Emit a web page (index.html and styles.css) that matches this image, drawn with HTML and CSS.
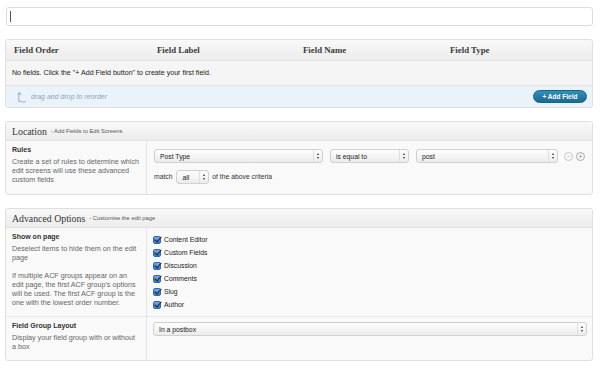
FILE: index.html
```html
<!DOCTYPE html>
<html>
<head>
<meta charset="utf-8">
<title>Edit Field Group</title>
<link rel="stylesheet" href="styles.css">
</head>
<body>
<div class="page">

  <div class="title_box"><span class="caret"></span></div>

  <div class="fields">
    <div class="fields_head">
      <span>Field Order</span>
      <span>Field Label</span>
      <span>Field Name</span>
      <span>Field Type</span>
    </div>
    <div class="fields_empty">No fields. Click the "+ Add Field button" to create your first field.</div>
    <div class="fields_foot">
      <div class="drag">
        <svg width="12" height="12" viewBox="0 0 12 12"><path d="M3 10.5 C2.5 7 2.5 4 3.5 1.5 M1.5 3.5 L3.5 1.5 L5 3.8 M3.5 10.2 C5 11 7 11 9.5 10.8" fill="none" stroke="#8fa7b8" stroke-width="0.9" stroke-linecap="round"/></svg>
        <span>drag and drop to reorder</span>
      </div>
      <div class="add_btn">+ Add Field</div>
    </div>
  </div>

  <!-- Location -->
  <div class="postbox">
    <div class="postbox_head"><h3>Location</h3><small>- Add Fields to Edit Screens</small></div>
    <div class="row loc_row">
      <div class="label">
        <b>Rules</b>
        <p>Create a set of rules to determine which edit screens will use these advanced custom fields</p>
      </div>
      <div class="field">
        <div class="rule">
          <div class="select w_param">Post Type<i class="arr"></i></div>
          <div class="select w_op">is equal to<i class="arr"></i></div>
          <div class="select w_val">post<i class="arr"></i></div>
          <span class="circ">&minus;</span>
          <span class="circ plus">+</span>
        </div>
        <div class="match">
          match <div class="select w_all">all<i class="arr"></i></div> of the above criteria
        </div>
      </div>
    </div>
  </div>

  <!-- Advanced Options -->
  <div class="postbox">
    <div class="postbox_head"><h3>Advanced Options</h3><small>- Customise the edit page</small></div>
    <div class="row show_row">
      <div class="label">
        <b>Show on page</b>
        <p>Deselect items to hide them on the edit page</p>
        <p class="gap">If multiple ACF groups appear on an edit page, the first ACF group's options will be used. The first ACF group is the one with the lowest order number.</p>
      </div>
      <ul class="field checks">
        <li><i class="cb"></i>Content Editor</li>
        <li><i class="cb"></i>Custom Fields</li>
        <li><i class="cb"></i>Discussion</li>
        <li><i class="cb"></i>Comments</li>
        <li><i class="cb"></i>Slug</li>
        <li><i class="cb"></i>Author</li>
      </ul>
    </div>
    <div class="row layout_row">
      <div class="label">
        <b>Field Group Layout</b>
        <p>Display your field group with or without a box</p>
      </div>
      <div class="field">
        <div class="select w_full">In a postbox<i class="arr"></i></div>
      </div>
    </div>
  </div>

</div>
</body>
</html>
```

FILE: styles.css
```css
* {
    margin: 0;
    padding: 0;
    box-sizing: border-box;
}

body {
    background: #fff;
    font-family: "Liberation Sans", Arial, sans-serif;
    font-size: 7px;
    color: #333;
}

.page {
    width: 588px;
    margin: 7px 0 0 5px;
}

/* title input */
.title_box {
    margin-left: 1px;
    height: 19px;
    border: 1px solid #dcdcdc;
    border-radius: 3px;
    background: #fff;
    padding: 3px 0 0 3px;
}

.caret {
    display: block;
    width: 1px;
    height: 11px;
    background: #555;
}

/* fields table */
.fields {
    margin-top: 13px;
    border: 1px solid #dfdfdf;
    border-radius: 3px;
    overflow: hidden;
}

.fields_head {
    height: 21px;
    display: grid;
    grid-template-columns: 143px 146px 147px 1fr;
    align-items: center;
    padding-left: 8px;
    background: linear-gradient(#f9f9f9, #ececec);
    border-bottom: 1px solid #e2e2e2;
    font-family: "Liberation Serif", Georgia, serif;
    font-size: 8.8px;
    font-weight: bold;
    color: #3a3a3a;
}

.fields_empty {
    height: 25px;
    line-height: 24px;
    padding-left: 6px;
    background: #f5f5f5;
    border-bottom: 1px solid #e4e4e4;
    color: #222;
    font-size: 7.1px;
}

.fields_foot {
    height: 21px;
    display: flex;
    align-items: center;
    justify-content: space-between;
    padding: 0 5px 0 10px;
    background: #eaf2fa;
}

.drag {
    display: flex;
    align-items: center;
    gap: 3px;
    color: #8fa3b3;
    font-size: 6.8px;
    font-style: italic;
    letter-spacing: 0.1px;
}

.add_btn {
    width: 54px;
    height: 13px;
    line-height: 11px;
    border-radius: 7px;
    text-align: center;
    background: linear-gradient(#2f8fbb, #1b6a8f);
    border: 1px solid #1a6386;
    color: #fff;
    font-weight: bold;
    font-size: 6.5px;
}

/* postboxes */
.postbox {
    margin-top: 13px;
    border: 1px solid #dfdfdf;
    border-radius: 3px;
    background: #f9f9f9;
    overflow: hidden;
}

.postbox_head {
    height: 19px;
    display: flex;
    align-items: center;
    gap: 4px;
    padding-left: 6px;
    background: linear-gradient(#f9f9f9, #ececec);
    border-bottom: 1px solid #e2e2e2;
}

.postbox_head h3 {
    font-family: "Liberation Serif", Georgia, serif;
    font-weight: normal;
    font-size: 9.8px;
    color: #333;
}

.postbox_head small {
    font-size: 5.8px;
    color: #555;
}

.row {
    display: grid;
    grid-template-columns: 141px 1fr;
}

.row + .row {
    border-top: 1px solid #e8e8e8;
}

.label {
    border-right: 1px solid #e5e5e5;
    padding: 4px 6px 0 6px;
    color: #666;
    font-size: 7.2px;
    line-height: 9px;
}

.label b {
    display: block;
    color: #333;
    font-size: 7px;
    margin-bottom: 3px;
}

.label p.gap {
    margin-top: 9px;
}

.field {
    padding: 8px 7px 0 7px;
}

.loc_row {
    height: 53px;
}

.show_row {
    height: 88px;
}

.layout_row {
    height: 44px;
}

.layout_row .field {
    padding-top: 5px;
}

/* selects */
.select {
    position: relative;
    display: inline-block;
    height: 14px;
    line-height: 13px;
    padding-left: 5px;
    border: 1px solid #d0d0d0;
    border-radius: 3px;
    background: linear-gradient(#fdfdfd, #ececec);
    color: #222;
    font-size: 6.8px;
    vertical-align: middle;
}

.arr {
    position: absolute;
    top: 0;
    right: 0;
    width: 9px;
    height: 12px;
    border-left: 1px solid #e0e0e0;
}

.arr::before, .arr::after {
    content: "";
    position: absolute;
    left: 3px;
    border-left: 1.5px solid transparent;
    border-right: 1.5px solid transparent;
}

.arr::before {
    top: 3px;
    border-bottom: 2px solid #333;
}

.arr::after {
    top: 6.5px;
    border-top: 2px solid #333;
}

.rule {
    display: flex;
    align-items: center;
}

.w_param { width: 169px; }
.w_op { width: 79px; margin-left: 7px; }
.w_val { width: 142px; margin-left: 7px; }
.w_all { width: 33px; margin: 0 1px 0 2px; }
.w_full { display: block; width: 434px; margin-left: -1px; }

.circ {
    width: 9px;
    height: 9px;
    margin-left: 4px;
    border: 1px solid #c8c8c8;
    border-radius: 50%;
    color: #bbb;
    font-size: 7px;
    line-height: 7px;
    text-align: center;
}

.circ:first-of-type {
    margin-left: 6px;
}

.circ.plus {
    margin-left: 3px;
    border-color: #aaa;
    color: #888;
}

.match {
    margin-top: 7px;
    color: #333;
    font-size: 6.8px;
}

/* checkbox list */
.checks {
    list-style: none;
    padding: 5px 0 0 6px;
}

.checks li {
    display: flex;
    align-items: center;
    height: 13px;
    color: #222;
    font-size: 6.8px;
}

.cb {
    position: relative;
    width: 8px;
    height: 8px;
    margin-right: 3px;
    border-radius: 2px;
    background: linear-gradient(#78a9e0, #3a76c4);
    border: 1px solid #3467a8;
}

.cb::after {
    content: "";
    position: absolute;
    left: 2px;
    top: -2px;
    width: 3px;
    height: 6px;
    border-right: 1.5px solid #14233a;
    border-bottom: 1.5px solid #14233a;
    transform: rotate(40deg);
}
```
